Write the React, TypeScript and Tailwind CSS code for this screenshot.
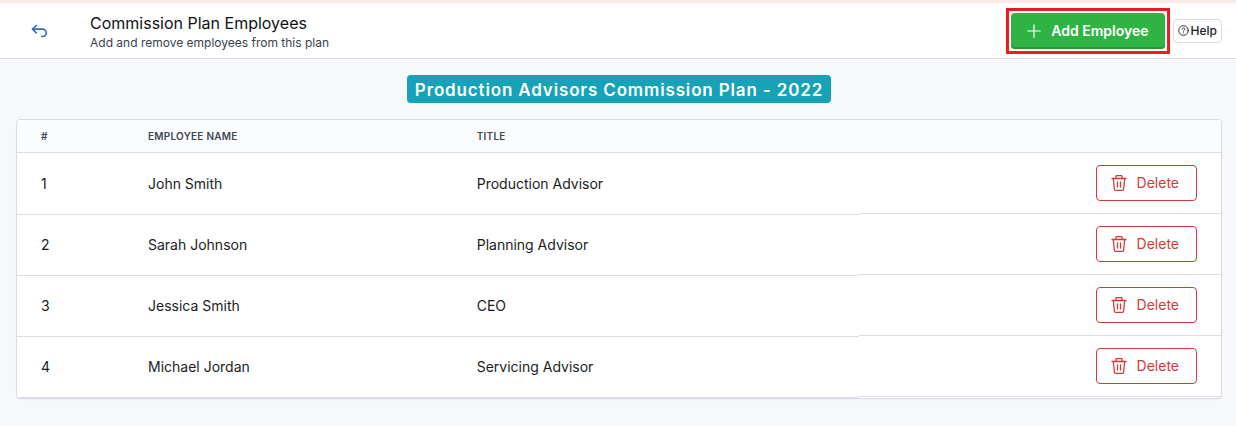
import React from 'react';
import { TbArrowBackUp } from 'react-icons/tb';

interface Employee {
  id: number;
  name: string;
  title: string;
}

const employees: Employee[] = [
  { id: 1, name: 'John Smith', title: 'Production Advisor' },
  { id: 2, name: 'Sarah Johnson', title: 'Planning Advisor' },
  { id: 3, name: 'Jessica Smith', title: 'CEO' },
  { id: 4, name: 'Michael Jordan', title: 'Servicing Advisor' },
];

const PlusIcon = () => (
  <svg className="w-3.5 h-3.5 shrink-0" viewBox="0 0 14 14" fill="none" stroke="currentColor" strokeWidth="1.2" strokeLinecap="round" aria-hidden="true">
    <path d="M7 .8v12.4M.8 7h12.4" />
  </svg>
);

const HelpIcon = () => (
  <svg className="w-[11px] h-[11px] shrink-0" viewBox="0 0 12 12" fill="none" stroke="currentColor" strokeLinecap="round" aria-hidden="true">
    <circle cx="6" cy="6" r="5.2" strokeWidth="1" />
    <path d="M4.6 4.7a1.4 1.4 0 1 1 2.1 1.2c-.5.3-.7.5-.7.9" strokeWidth="0.9" />
    <circle cx="6" cy="8.5" r="0.55" fill="currentColor" stroke="none" />
  </svg>
);

const TrashIcon = () => (
  <svg className="w-4 h-4 shrink-0" viewBox="0 0 16 16" fill="none" stroke="currentColor" strokeWidth="1.3" strokeLinecap="round" strokeLinejoin="round" aria-hidden="true">
    <path d="M1 3.5h14" />
    <path d="M5 3.5V1.2a.6.6 0 0 1 .6-.6h4.8a.6.6 0 0 1 .6.6v2.3" />
    <path d="M2.3 3.5l1.1 10.7a1.2 1.2 0 0 0 1.2 1.1h6.8a1.2 1.2 0 0 0 1.2-1.1l1.1-10.7" />
    <path d="M6.5 6.8v5.2M9.5 6.8v5.2" />
  </svg>
);

const Header = () => (
  <header className="flex items-center h-14 pl-7 pr-3.5 bg-white border-b border-[#d9dbe3]">
    <a href="#back" aria-label="Back" className="text-[#2f6fc4]">
      <TbArrowBackUp size={22} strokeWidth={1.8} />
    </a>
    <div className="flex-1 pl-10 pt-1">
      <h1 className="text-base leading-5 text-[#0f1115]">Commission Plan Employees</h1>
      <p className="text-xs leading-5 text-[#3a3f4a]">Add and remove employees from this plan</p>
    </div>
    <div className="flex items-center gap-[3px]">
      <div className="border-3 border-[#ed1c24] p-[2px]">
        <button
          type="button"
          className="flex items-center gap-2.5 h-9 px-4 rounded-sm bg-[#2fb344] shadow-[inset_0_-2px_0_#28983a] text-sm font-semibold text-white"
        >
          <PlusIcon />
          Add Employee
        </button>
      </div>
      <button type="button" className="flex items-center gap-0.5 h-6 px-1 rounded-sm border border-[#dadce5] bg-white text-xs font-medium text-[#1d2129]">
        <HelpIcon />
        Help
      </button>
    </div>
  </header>
);

const EmployeeRow: React.FC<{ employee: Employee }> = ({ employee }) => (
  <tr className="group h-[61px] first:h-[62px] text-sm text-[#1a1d24]">
    <td className="pl-6 border-b border-[#dadde2]">{employee.id}</td>
    <td className="border-b border-[#dadde2]">{employee.name}</td>
    <td className="border-b border-[#dadde2]">{employee.title}</td>
    {/* the action cell draws its own rule, one pixel above the others */}
    <td className="align-top">
      <div className="flex items-start justify-end h-[60px] pt-[11px] group-first:h-[61px] group-first:pt-3 pr-6 border-b border-[#dadde2]">
        <button
          type="button"
          aria-label={`Delete ${employee.name}`}
          className="flex items-center gap-2.5 h-9 pl-3.5 pr-[17px] rounded-sm border border-[#d63939] bg-white text-[#d63939]"
        >
          <TrashIcon />
          Delete
        </button>
      </div>
    </td>
  </tr>
);

const App = () => (
  <div className="min-h-screen bg-[#f6f8fc] border-t-3 border-[#fbebeb] font-['Inter',sans-serif]">
    <Header />
    <main className="px-4 pt-4 pr-3.5">
      <div className="flex justify-center">
        <h2 className="h-7 px-2 rounded-sm bg-[#17a2b8] text-[17px] leading-[30px] font-semibold tracking-wider text-white">
          Production Advisors Commission Plan - 2022
        </h2>
      </div>
      <div className="mt-4 overflow-hidden rounded-sm border border-[#dadce2] bg-white shadow-xs">
        <table className="w-full table-fixed border-separate border-spacing-0">
          <colgroup>
            <col className="w-[131px]" />
            <col className="w-[27.3%]" />
            <col />
            <col className="w-[30.1%]" />
          </colgroup>
          <thead>
            <tr className="h-[33px] bg-[#fbfcfe] text-left text-[10px] uppercase text-[#3f4755] *:border-b *:border-[#dadde2] *:font-semibold *:tracking-wide">
              <th scope="col" className="pl-6">#</th>
              <th scope="col">Employee Name</th>
              <th scope="col">Title</th>
              <th scope="col" aria-label="Actions" />
            </tr>
          </thead>
          <tbody>
            {employees.map((employee) => (
              <EmployeeRow key={employee.id} employee={employee} />
            ))}
          </tbody>
        </table>
      </div>
    </main>
  </div>
);

export default App;
